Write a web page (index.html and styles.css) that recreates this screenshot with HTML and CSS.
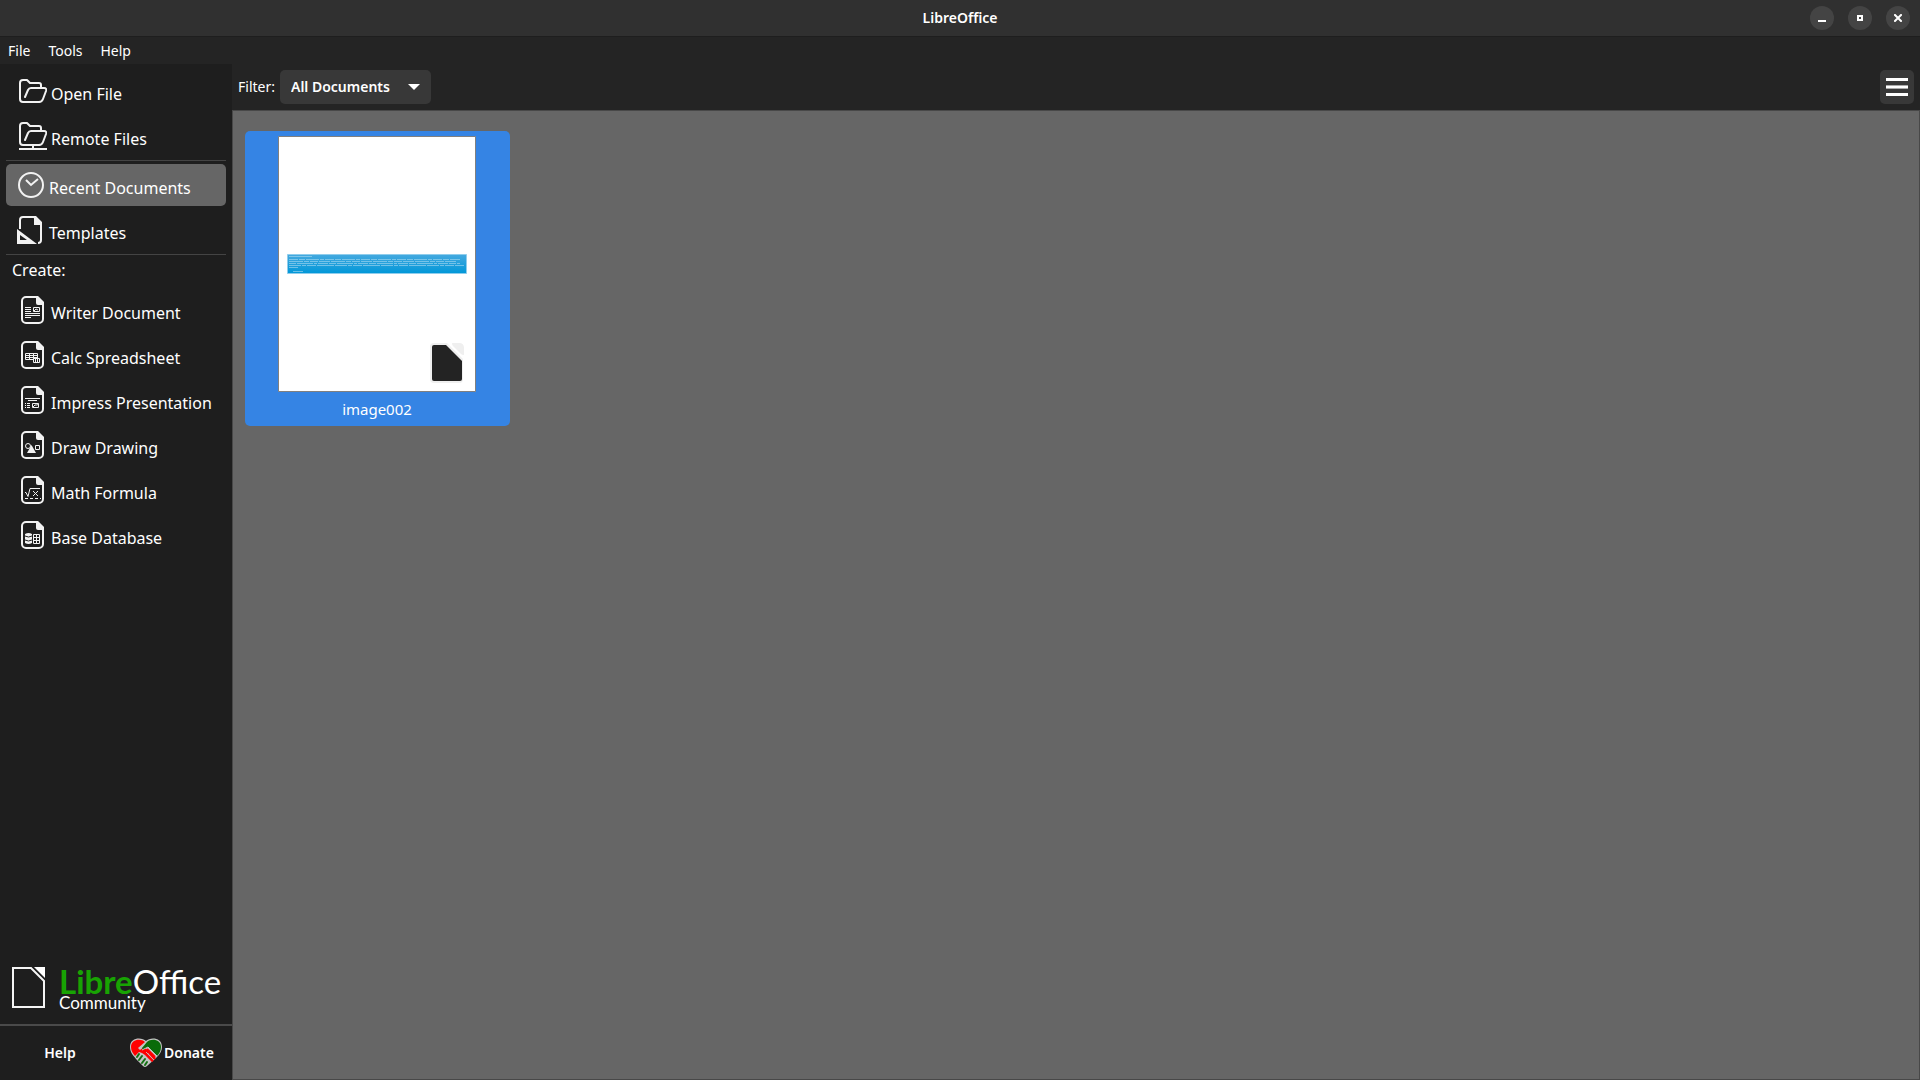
FILE: index.html
```html
<!DOCTYPE html>
<html lang="en">
<head>
<meta charset="utf-8">
<title>LibreOffice</title>
<link rel="stylesheet" href="styles.css">
</head>
<body>
<svg class="defs" aria-hidden="true">
  <defs>
    <g id="folder" fill="none" stroke="#f2f2f2" stroke-width="2" stroke-linejoin="round" stroke-linecap="round">
      <path d="M20 23H4a3 3 0 0 1-3-3V4a3 3 0 0 1 3-3h4l3 3h9a2 2 0 0 1 2 2v3"/>
      <path d="M6 18l3-7q1-2 3-2h13q3 0 2 3l-3 8q-1 3-4 3"/>
    </g>
    <g id="page">
      <path d="M5 1h11l6 6v16a4 4 0 0 1-4 4H5a4 4 0 0 1-4-4V5a4 4 0 0 1 4-4z" fill="none" stroke="#f2f2f2" stroke-width="2"/>
      <path d="M15 0h2l6 6v3h-6q-2 0-2-2z" fill="#f2f2f2"/>
    </g>
  </defs>
</svg>
<div class="window">
  <header class="titlebar">
    <h1 class="title">LibreOffice</h1>
    <div class="controls">
      <button class="control" aria-label="Minimize"><svg width="8" height="8" viewBox="0 0 8 8"><path d="M0 6h8v2H0z" fill="#fff"/></svg></button>
      <button class="control" aria-label="Restore"><svg width="6" height="6" viewBox="0 0 6 6"><path d="M1 1h4v4H1z" fill="none" stroke="#fff" stroke-width="2"/></svg></button>
      <button class="control" aria-label="Close"><svg width="8" height="8" viewBox="0 0 8 8"><path d="M1 1l6 6M7 1L1 7" stroke="#fff" stroke-width="2" stroke-linecap="square"/></svg></button>
    </div>
  </header>
  <nav class="menubar">
    <button class="menu">File</button>
    <button class="menu">Tools</button>
    <button class="menu">Help</button>
  </nav>
  <div class="workspace">
    <aside class="sidebar">
      <div class="group">
        <button class="entry">
          <svg class="icon icon-wide" viewBox="0 0 28 24"><use href="#folder"/></svg>
          <span class="label">Open File</span>
        </button>
        <button class="entry">
          <svg class="icon icon-wide" viewBox="0 0 28 28"><use href="#folder"/><path d="M0 26h28v2H0zM13 24h2v2h-2z" fill="#f2f2f2"/></svg>
          <span class="label">Remote Files</span>
        </button>
      </div>
      <hr class="rule">
      <div class="group">
        <button class="entry entry-view selected">
          <svg class="icon icon-view" viewBox="0 0 27 26"><g fill="none" stroke="#f2f2f2" stroke-width="2"><circle cx="14" cy="13" r="12"/><path d="M9 8l5 5 7-6"/></g></svg>
          <span class="label">Recent Documents</span>
        </button>
        <button class="entry entry-view">
          <svg class="icon icon-view" viewBox="0 0 27 28"><path d="M3 13V4a3 3 0 0 1 3-3h11l7 7v16a3 3 0 0 1-3 3" fill="none" stroke="#f2f2f2" stroke-width="2"/><path d="M17 0h2l6 6v3h-8zM0 13l20 15H0zM3 19v5h7z" fill="#f2f2f2" fill-rule="evenodd"/></svg>
          <span class="label">Templates</span>
        </button>
      </div>
      <hr class="rule">
      <p class="heading">Create:</p>
      <div class="group group-create">
        <button class="entry">
          <svg class="icon icon-doc" viewBox="0 0 23 28"><use href="#page"/><g stroke="#f2f2f2" fill="none"><path d="M4 11.500h6M4 13.500h6M4 15.500h6M4 17.500h15M4 19.500h15M4 21.500h6"/><path d="M12.500 11.500h6v4h-6zM13 15l2-2 2 1"/></g></svg>
          <span class="label">Writer Document</span>
        </button>
        <button class="entry">
          <svg class="icon icon-doc" viewBox="0 0 23 28"><use href="#page"/><g stroke="#f2f2f2" fill="none"><path d="M4.500 12.500h12v6h-12zM4 14.500h12M4 16.500h12M8.500 12v7M12.500 12v7"/><path d="M12.500 17.500h6v4h-6z" fill="#1e1e1e"/><path d="M14.500 18v3M16.500 16v5"/></g></svg>
          <span class="label">Calc Spreadsheet</span>
        </button>
        <button class="entry">
          <svg class="icon icon-doc" viewBox="0 0 23 28"><use href="#page"/><g stroke="#f2f2f2" fill="none"><path d="M4 12.500h15M7 14.500h9M4 17.500h1M6 17.500h3M4 19.500h1M6 19.500h3M4 21.500h1M6 21.500h3"/><path d="M11.500 17.500h6v4h-6zM12 21l2-2h2l2-1"/></g></svg>
          <span class="label">Impress Presentation</span>
        </button>
        <button class="entry">
          <svg class="icon icon-doc" viewBox="0 0 23 28"><use href="#page"/><circle cx="7" cy="15" r="2.500" fill="none" stroke="#f2f2f2"/><path d="M14.500 14.500h4v4h-4z" fill="none" stroke="#f2f2f2"/><path d="M6 22l4.500-8 4.500 8z" fill="#f2f2f2"/></svg>
          <span class="label">Draw Drawing</span>
        </button>
        <button class="entry">
          <svg class="icon icon-doc" viewBox="0 0 23 28"><use href="#page"/><g fill="none" stroke="#f2f2f2"><path d="M4 16.500h1l2 4 2-8h10M12 15l5 5M17 15l-5 5"/><path d="M4 22.500h16" stroke-dasharray="3 2"/></g></svg>
          <span class="label">Math Formula</span>
        </button>
        <button class="entry">
          <svg class="icon icon-doc" viewBox="0 0 23 28"><use href="#page"/><path d="M4 13q3.500-2 7 0v9q-3.500 2-7 0z" fill="#f2f2f2"/><path d="M4 15q3.500 2 7 0M4 19q3.500 2 7 0" fill="none" stroke="#1e1e1e"/><path d="M12.500 13.500h6v9h-6zM12 16.500h7M12 19.500h7M15.500 13v10" fill="none" stroke="#f2f2f2"/></svg>
          <span class="label">Base Database</span>
        </button>
      </div>
      <div class="brand">
        <svg class="brand-page" viewBox="0 0 33 42"><path d="M1 1h18l13 13v26H1z" fill="none" stroke="#f4f4f4" stroke-width="2"/><path d="M22 0h11v11z" fill="#fff"/></svg>
        <div class="brand-text">
          <span class="brand-name"><b class="brand-libre">Libre</b>Office</span>
          <span class="brand-edition">Community</span>
        </div>
      </div>
      <footer class="footer">
        <button class="footer-button">Help</button>
        <button class="footer-button">
          <svg class="heart" viewBox="0 0 32 30">
            <path d="M16 3C12-1 0-1 0 9c0 6 4 9 6 12l7 7q2 2 4 0l9-8c4-4 6-7 6-11C32-1 20-1 16 3z" fill="#c4c4c4"/>
            <path d="M15 4C11 0 1 1 1 9c0 4 2 6 4 9l4-4 3 1 3 2 7 7 1-1-6-7 1-1 6 7 2-2-7-7-5-4-4 3-2-2z" fill="#f00"/>
            <path d="M17 4c4-4 14-3 14 5 0 4-2 7-4 9L18 9l-5 3-1-2z" fill="#0a6b0a"/>
            <path d="M12 12l6-3 9 9M16 14l8 8M14 17l7 7" fill="none" stroke="#c4c4c4"/>
            <path d="M17 11l8 8M15 15l8 8" fill="none" stroke="#f00" stroke-width="2"/>
            <path d="M7 19l2-3M9 22l3-4M12 25l3-4M15 27l2-3" stroke="#137013" stroke-width="2" stroke-linecap="round"/>
          </svg>
          Donate
        </button>
      </footer>
    </aside>
    <main class="main">
      <div class="toolbar">
        <label class="filter-label" for="filter">Filter:</label>
        <div class="select-wrap">
          <select class="filter" id="filter"><option>All Documents</option></select>
          <svg class="arrow" viewBox="0 0 12 6"><path d="M0 0h12L6 6z" fill="#fff"/></svg>
        </div>
        <button class="hamburger" aria-label="Actions"><svg width="22" height="18" viewBox="0 0 22 18"><path d="M0 0h22v3H0zM0 15h22v3H0z" fill="#fff"/><path d="M0 7h22v4H0z" fill="#aaa"/><path d="M0 8h22v2H0z" fill="#fff"/></svg></button>
      </div>
      <div class="documents">
        <a class="document" href="#image002">
          <svg class="thumb" viewBox="0 0 198 256">
            <defs><linearGradient id="sky" x1="0" y1="0" x2="0" y2="1"><stop offset="0" stop-color="#45a9df"/><stop offset="1" stop-color="#0097d8"/></linearGradient></defs>
            <path d="M.5.5h197v255H.5z" fill="#fff" stroke="#808080"/>
            <path d="M9.500 118.500h179v19h-179z" fill="url(#sky)" stroke="#8fcdec"/>
            <g stroke="#a9daf1" opacity=".6">
              <path d="M11 120.500h23M15 135.500h10"/>
              <path d="M11 123.500h171" stroke-dasharray="9 1 6 1 13 1 4 1"/>
              <path d="M11 125.500h168" stroke-dasharray="14 1 5 1 8 1 11 1"/>
              <path d="M11 127.500h171" stroke-dasharray="7 1 16 1 3 1 10 1"/>
              <path d="M11 129.500h175" stroke-dasharray="12 1 4 1 9 1 17 1"/>
              <path d="M11 131.500h9"/>
            </g>
            <path d="M156 207h13l16 16v20q0 4-4 4h-25q-4 0-4-4v-32q0-4 4-4z" fill="#efefef"/>
            <path d="M156 209h12l16 16v18q0 2-2 2h-26q-2 0-2-2v-32q0-2 2-2z" fill="#232323"/>
            <path d="M174 207h7q5 0 5 5v7q-2 0-3-1l-8-8q-1-1-1-3z" fill="#efefef"/>
          </svg>
          <span class="document-name">image002</span>
        </a>
      </div>
    </main>
  </div>
</div>
</body>
</html>
```

FILE: styles.css
```css
* {
  box-sizing: border-box;
}

body {
  margin: 0;
  background: #1e1e1e;
  color: #fff;
  font: 15px/20px "Noto Sans", sans-serif;
}

button,
select {
  margin: 0;
  padding: 0;
  border: 0;
  background: none;
  color: inherit;
  font: inherit;
}

svg {
  display: block;
  flex: none;
}

.defs {
  position: absolute;
  width: 0;
  height: 0;
}

.window {
  display: flex;
  flex-direction: column;
  min-height: 100vh;
}

.titlebar {
  display: grid;
  grid-template-columns: 1fr auto 1fr;
  align-items: center;
  height: 37px;
  padding: 0 10px;
  background: #303030;
  border-bottom: 1px solid #1e1e1e;
}

.title {
  grid-column: 2;
  margin: 0;
  font-size: 14px;
  font-weight: 600;
}

.controls {
  display: flex;
  justify-content: flex-end;
  gap: 14px;
}

.control {
  display: grid;
  place-items: center;
  width: 24px;
  height: 24px;
  border-radius: 50%;
  background: #444;
}

.menubar {
  display: flex;
  gap: 18px;
  height: 27px;
  padding: 0 8px;
  background: #242424;
  font-size: 14px;
}

.workspace {
  display: flex;
  flex: 1;
}

.sidebar {
  display: flex;
  flex-direction: column;
  width: 232px;
  padding-top: 6px;
}

.group {
  display: flex;
  flex-direction: column;
  gap: 3px;
  padding: 0 6px;
}

.entry {
  display: flex;
  align-items: center;
  gap: 4px;
  height: 42px;
  padding: 0 13px;
  border-radius: 5px;
  font-size: 16px;
  text-align: left;
  white-space: nowrap;
}

.entry-view {
  gap: 5px;
  padding: 0 11px;
}

.selected {
  background: #666;
}

.label {
  padding-top: 6px;
}

.icon-wide {
  width: 28px;
}

.icon-view {
  width: 27px;
}

.icon-doc {
  width: 23px;
  margin: 0 3px 0 2px;
}

.rule {
  width: 220px;
  height: 1px;
  margin: 3px 6px;
  border: 0;
  background: #444;
}

.heading {
  margin: 0;
  padding: 2px 12px 9px;
  font-size: 16px;
}

.brand {
  display: flex;
  gap: 14px;
  margin-top: auto;
  padding: 0 12px 15px;
}

.brand-page {
  width: 33px;
  margin-top: 3px;
}

.brand-text {
  display: flex;
  flex-direction: column;
  padding-top: 1px;
  font-family: Lato, sans-serif;
}

.brand-name {
  font-size: 33px;
  line-height: 32px;
}

.brand-libre {
  color: #18a303;
}

.brand-edition {
  font-size: 17px;
  line-height: 12px;
}

.footer {
  display: grid;
  grid-template-columns: 1fr 1fr;
  height: 56px;
  padding: 0 4px;
  border-top: 2px solid #4a4a4a;
}

.footer-button {
  display: flex;
  align-items: center;
  justify-content: center;
  gap: 2px;
  font-size: 14px;
  font-weight: 600;
}

.heart {
  width: 32px;
}

.main {
  display: flex;
  flex: 1;
  flex-direction: column;
}

.toolbar {
  display: flex;
  align-items: center;
  gap: 5px;
  height: 46px;
  padding: 0 6px;
  background: #242424;
}

.filter-label {
  font-size: 14px;
}

.select-wrap {
  display: grid;
  align-items: center;
  width: 151px;
}

.filter,
.arrow {
  grid-area: 1 / 1;
}

.filter {
  height: 34px;
  padding: 0 11px;
  border-radius: 5px;
  appearance: none;
  background: #383838;
  font-size: 14px;
  font-weight: 600;
}

.arrow {
  justify-self: end;
  width: 12px;
  margin-right: 11px;
  pointer-events: none;
}

.hamburger {
  display: grid;
  place-items: center;
  width: 34px;
  height: 34px;
  margin-left: auto;
  border-radius: 5px;
  background: #383838;
}

.documents {
  flex: 1;
  padding: 20px 12px;
  border: 1px solid #484848;
  background: #666;
}

.document {
  display: flex;
  flex-direction: column;
  align-items: center;
  gap: 7px;
  width: 265px;
  padding: 5px 1px 7px 0;
  border-radius: 5px;
  background: #3584e4;
  color: #fff;
  text-decoration: none;
}

.thumb {
  width: 198px;
}
```
